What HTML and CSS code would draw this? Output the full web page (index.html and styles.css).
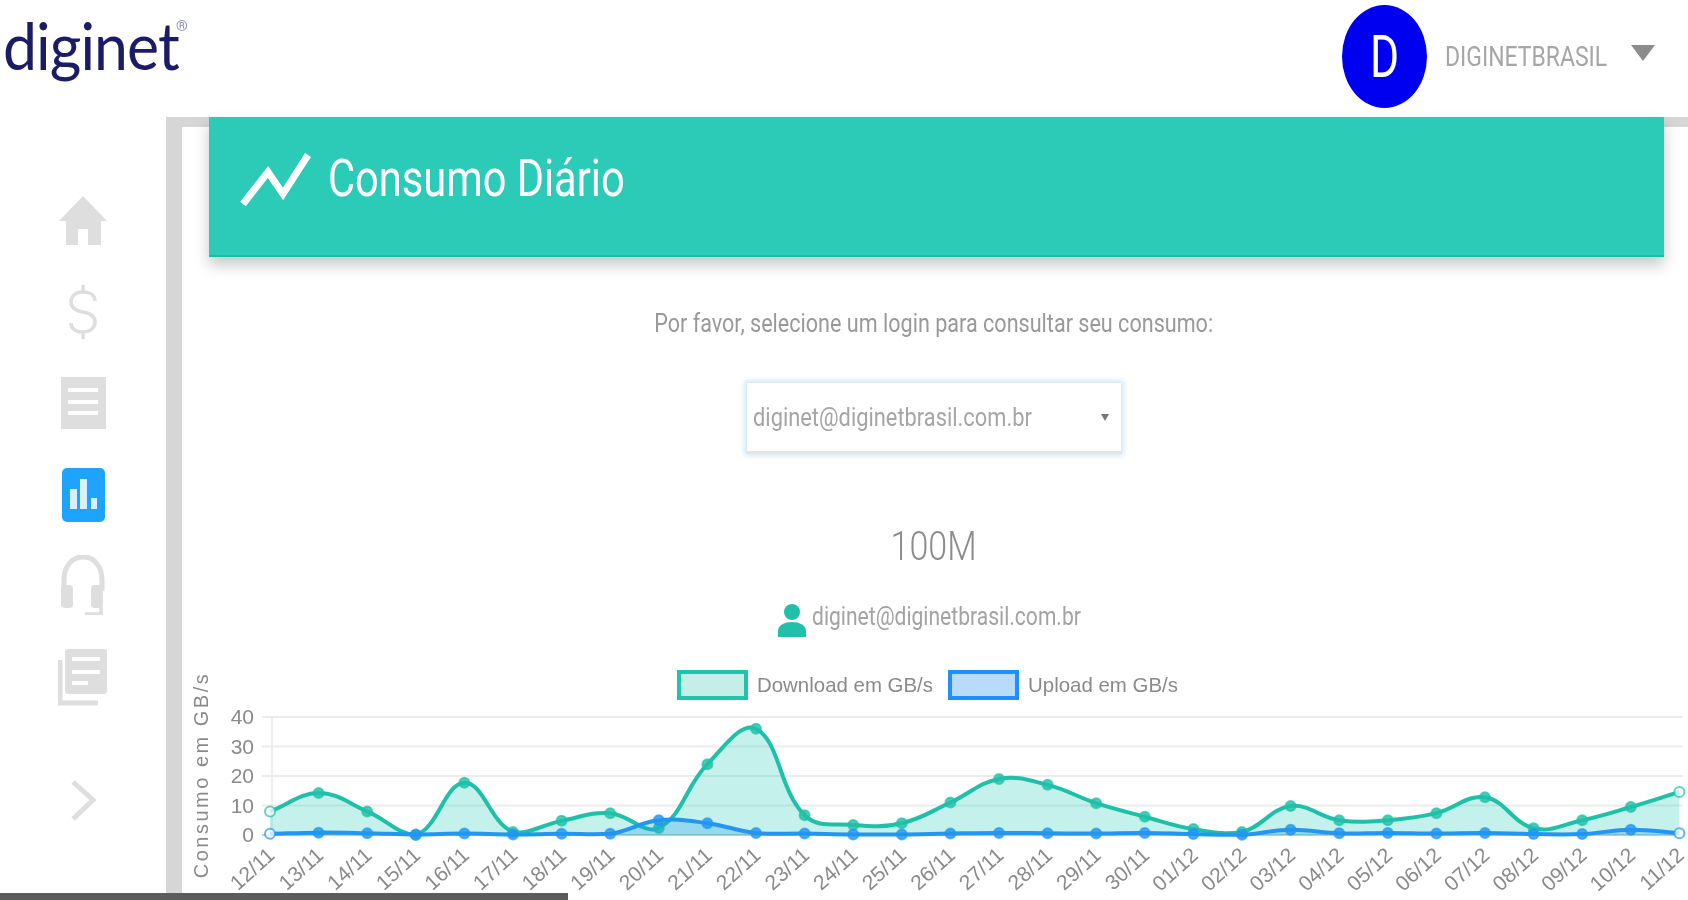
FILE: index.html
```html
<!DOCTYPE html>
<html lang="pt-BR">
<head>
<meta charset="utf-8">
<title>Consumo Diário</title>
<link rel="stylesheet" href="styles.css">
</head>
<body>
<div class="page">
  <header class="topbar">
    <div class="logo"><span class="logo-word">diginet</span><span class="logo-reg">®</span></div>
    <div class="user">
      <div class="avatar"><span class="avatar-letter">D</span></div>
      <span class="user-name">DIGINETBRASIL</span>
      <span class="user-caret"></span>
    </div>
  </header>
  <div class="body">
    <nav class="sidebar">
      <a class="nav-item"><svg class="nav-icon" viewBox="0 0 50 60"><path class="ic-fill" d="M25 5 L49 30 H43 V54 H30 V38 H20 V54 H8 V30 H1 Z"/></svg></a>
      <a class="nav-item"><svg class="nav-icon" viewBox="0 0 50 60"><path class="ic-line" d="M37 19 C37 13 32 10 25 10 C18 10 13 14 13 20 C13 27 19 29 25 30 C31 31 37 34 37 40 C37 46 32 50 25 50 C18 50 13 47 13 41 M25 3 V10 M25 50 V57"/></svg></a>
      <a class="nav-item"><svg class="nav-icon" viewBox="0 0 50 60"><rect class="ic-fill" x="3" y="4" width="45" height="52"/><path class="ic-cut" d="M10 17 H40 M10 29 H40 M10 40 H40"/></svg></a>
      <a class="nav-item"><svg class="nav-icon" viewBox="0 0 50 60"><rect class="ic-active" x="4" y="4" width="43" height="54" rx="5"/><path class="ic-bars" d="M12 25 h7 v20 h-7 Z M22 15 h7 v30 h-7 Z M33 34 h6 v11 h-6 Z"/></svg></a>
      <a class="nav-item"><svg class="nav-icon" viewBox="0 0 50 60"><path class="ic-line ic-thick" d="M6 36 V25 C6 11 14 2 25 2 C36 2 44 11 44 25 V36"/><rect class="ic-fill" x="3" y="30" width="12" height="23" rx="4"/><rect class="ic-fill" x="33" y="30" width="12" height="23" rx="4"/><path class="ic-line" d="M43 50 V59 H27"/></svg></a>
      <a class="nav-item"><svg class="nav-icon" viewBox="0 0 50 60"><rect class="ic-fill" x="7" y="3" width="42" height="45" rx="3"/><path class="ic-cut" d="M14 13 H42 M14 26 H42 M14 37 H30"/><path class="ic-line ic-thick" d="M2 14 V57 H40"/></svg></a>
      <a class="nav-item nav-toggle"><svg class="nav-icon" viewBox="0 0 50 60"><path class="ic-line ic-thick" d="M15 12 L35 30 L15 49"/></svg></a>
    </nav>
    <main class="frame">
      <section class="card-head">
        <svg class="head-icon" viewBox="0 0 72 55"><path d="M3 52 L28 20 L43 42 L68 3"/></svg>
        <h1 class="head-title">Consumo Diário</h1>
      </section>
      <div class="content">
        <p class="prompt"><span class="squish">Por favor, selecione um login para consultar seu consumo:</span></p>
        <div class="select">
          <span class="select-value">diginet@diginetbrasil.com.br</span>
          <span class="select-caret"></span>
        </div>
        <h2 class="plan"><span class="squish">100M</span></h2>
        <div class="login-row">
          <svg class="login-icon" viewBox="0 0 28 34"><circle cx="14" cy="9" r="8"/><path d="M0 34 V28 C0 22 7 19 14 19 C21 19 28 22 28 28 V34 Z"/></svg>
          <span class="login-text">diginet@diginetbrasil.com.br</span>
        </div>
        <svg id="chart" class="chart" viewBox="0 0 1506 240" width="1506" height="240"></svg>
      </div>
    </main>
  </div>
  <div class="scrollbar"></div>
</div>
<script src="chart.js"></script>
</body>
</html>
```
FILE: styles.css
```css
* { box-sizing: border-box; }
html, body { margin: 0; padding: 0; background: #fff; }
body { font-family: Roboto, "Liberation Sans", sans-serif; overflow: hidden; }
.page { position: relative; width: 1688px; height: 900px; overflow: hidden; display: flex; flex-direction: column; background: #fff; filter: blur(0.7px); }

.topbar { height: 117px; flex: none; display: flex; justify-content: space-between; align-items: flex-start; }
.logo { display: flex; align-items: flex-start; padding: 0 0 0 3px; height: 100%; color: #1b1b66; }
.logo-word { display: block; font-family: Lato, sans-serif; font-size: 66px; line-height: 90px; font-weight: 400; transform: scaleX(.92); transform-origin: left top; letter-spacing: -1px; }
.logo-reg { font-size: 15px; line-height: 20px; color: #8d8fb8; margin: 16px 0 0 -18px; }
.user { display: flex; align-items: center; height: 113px; padding-right: 33px; }
.avatar { width: 85px; height: 103px; border-radius: 50%; background: #0000f0; display: flex; align-items: center; justify-content: center; margin-right: 18px; }
.avatar-letter { color: #fff; font-size: 60px; line-height: 60px; display: block; transform: scaleX(.74); }
.user-name { color: #a6a6a6; font-size: 28px; display: block; width: 166px; white-space: nowrap; transform: scaleX(.82); transform-origin: left center; }
.user-caret { width: 0; height: 0; border-left: 12px solid transparent; border-right: 12px solid transparent; border-top: 16px solid #8c8c8c; margin: -8px 0 0 20px; }

.body { flex: 1; display: flex; min-height: 0; }
.sidebar { width: 166px; flex: none; display: flex; flex-direction: column; align-items: center; padding-top: 58px; }
.nav-item { height: 91px; display: flex; align-items: center; justify-content: center; flex: none; }
.nav-toggle { margin-top: 33px; }
.nav-icon { width: 50px; height: 60px; display: block; }
.ic-fill { fill: #dedede; }
.ic-line { fill: none; stroke: #dedede; stroke-width: 3.5; }
.ic-thick { stroke-width: 5; }
.ic-cut { fill: none; stroke: #fff; stroke-width: 4; }
.ic-active { fill: #1ea4ff; }
.ic-bars { fill: #d8efff; }

.frame { flex: 1; min-width: 0; border-left: 16px solid #d6d6d6; border-top: 10px solid #d6d6d6; background: #fff; display: flex; flex-direction: column; }
.card-head { flex: none; height: 140px; margin: -10px 24px 0 27px; background: #2bcbb8; border-bottom: 2px solid #12bfa9; box-shadow: 0 8px 14px rgba(0,0,0,.22); display: flex; align-items: center; padding: 0 0 14px 31px; }
.head-icon { width: 72px; height: 55px; flex: none; }
.head-icon path { fill: none; stroke: #fff; stroke-width: 7; }
.head-title { margin: 0 0 0 16px; color: #fff; font-weight: 400; font-size: 52px; line-height: 60px; white-space: nowrap; transform: scaleX(.8); transform-origin: left center; }

.content { flex: 1; display: flex; flex-direction: column; align-items: center; margin-right: -0px; padding: 0 0 0 0; min-height: 0; }
.squish { display: inline-block; white-space: nowrap; }
.prompt { margin: 51px 3px 0 0; color: #999; font-size: 26px; line-height: 30px; height: 30px; }
.prompt .squish { transform: scaleX(.83); }
.select { margin: 44px 3px 0 0; width: 376px; height: 72px; flex: none; background: #fff; border: 1px solid #d9ebf9; border-bottom: 3px solid #e4e4e4; box-shadow: 0 0 5px 2px #d5e9fa; display: flex; align-items: center; justify-content: space-between; padding: 0 12px 0 6px; color: #a5a5a5; }
.select-value { font-size: 26px; display: block; width: 303px; white-space: nowrap; transform: scaleX(.84); transform-origin: left center; }
.select-caret { width: 0; height: 0; border-left: 4px solid transparent; border-right: 4px solid transparent; border-top: 7px solid #777; }
.plan { margin: 68px 3px 0 0; color: #8c8c8c; font-weight: 300; font-size: 40px; line-height: 50px; height: 50px; }
.plan .squish { transform: scaleX(.85); }
.login-row { margin: 31px 3px 0 0; height: 34px; flex: none; display: flex; align-items: center; gap: 6px; }
.login-icon { width: 28px; height: 34px; flex: none; fill: #22c0ab; }
.login-text { color: #a3a3a3; font-size: 26px; display: block; width: 277px; margin-top: -8px; white-space: nowrap; transform: scaleX(.81); transform-origin: left center; }
.chart { display: block; flex: none; margin-top: 23px; width: 1506px; height: 240px; }
.chart text { font-family: "Liberation Sans", Arial, sans-serif; fill: #8a8a8a; }

.scrollbar { position: absolute; left: 0; bottom: 0; width: 568px; height: 7px; background: #5c5c5c; }
```
FILE: chart.js
```js
(function () {
  var svg = document.getElementById('chart');
  var NS = 'http://www.w3.org/2000/svg';
  function el(name, attrs, text, parent) {
    var n = document.createElementNS(NS, name);
    for (var k in attrs) n.setAttribute(k, attrs[k]);
    if (text) n.textContent = text;
    (parent || svg).appendChild(n);
    return n;
  }
  var OX = 182, OY = 660;
  var labels = ['12/11','13/11','14/11','15/11','16/11','17/11','18/11','19/11','20/11','21/11','22/11','23/11','24/11','25/11','26/11','27/11','28/11','29/11','30/11','01/12','02/12','03/12','04/12','05/12','06/12','07/12','08/12','09/12','10/12','11/12'];
  var down = [8,14.2,8,0,17.7,1,4.8,7.4,2.4,24,36,6.7,3.4,4,11,19,17,10.8,6.2,2,1,9.8,5,5,7.4,12.8,2.3,5,9.5,14.6];
  var up = [.4,.8,.6,.2,.5,.2,.4,.4,5,4,.7,.5,.2,.2,.5,.7,.6,.5,.7,.3,.1,1.8,.6,.7,.5,.7,.3,.3,1.8,.6];
  function X(i) { return 270 - OX + i * 48.6; }
  function Y(v) { return 835 - OY - v * 2.95; }

  [0,10,20,30,40].forEach(function (v) {
    var y = Y(v);
    el('line', { x1: 262 - OX, x2: 1683 - OX, y1: y, y2: y, stroke: v ? '#ececec' : '#c9c9c9', 'stroke-width': 2 });
    el('text', { x: 254 - OX, y: y + 7, 'text-anchor': 'end', 'font-size': 21 }, String(v));
  });
  el('line', { x1: X(0) + 2, x2: X(0) + 2, y1: Y(40), y2: Y(0) + 6, stroke: '#e8e8e8', 'stroke-width': 1.5 });

  el('text', { transform: 'translate(26,' + (775 - OY) + ') rotate(-90)', 'text-anchor': 'middle', 'font-size': 20, 'letter-spacing': 2.5 }, 'Consumo em GB/s');

  el('rect', { x: 679 - OX, y: 672 - OY, width: 67, height: 26, fill: '#c5eee8', stroke: '#1fc4ac', 'stroke-width': 4 });
  el('text', { x: 757 - OX, y: 692 - OY, 'font-size': 21, textLength: 176, lengthAdjust: 'spacingAndGlyphs' }, 'Download em GB/s');
  el('rect', { x: 950 - OX, y: 672 - OY, width: 67, height: 26, fill: '#b9dbfb', stroke: '#1e90ff', 'stroke-width': 4 });
  el('text', { x: 1028 - OX, y: 692 - OY, 'font-size': 21, textLength: 150, lengthAdjust: 'spacingAndGlyphs' }, 'Upload em GB/s');

  function curve(vals) {
    var t = 0.4, pts = vals.map(function (v, i) { return [X(i), Y(v)]; });
    var d = 'M' + pts[0][0] + ' ' + pts[0][1];
    function ctrl(p0, p1, p2) {
      var d01 = Math.hypot(p1[0] - p0[0], p1[1] - p0[1]);
      var d12 = Math.hypot(p2[0] - p1[0], p2[1] - p1[1]);
      var s = d01 + d12 || 1, fa = t * d01 / s, fb = t * d12 / s;
      return [[p1[0] - fa * (p2[0] - p0[0]), p1[1] - fa * (p2[1] - p0[1])],
              [p1[0] + fb * (p2[0] - p0[0]), p1[1] + fb * (p2[1] - p0[1])]];
    }
    for (var i = 0; i < pts.length - 1; i++) {
      var a = ctrl(pts[Math.max(i - 1, 0)], pts[i], pts[i + 1]);
      var b = ctrl(pts[i], pts[i + 1], pts[Math.min(i + 2, pts.length - 1)]);
      d += ' C' + a[1][0] + ' ' + Math.min(a[1][1], Y(0)) + ' ' + b[0][0] + ' ' + Math.min(b[0][1], Y(0)) + ' ' + pts[i + 1][0] + ' ' + pts[i + 1][1];
    }
    return d;
  }
  function series(vals, stroke, fill) {
    var d = curve(vals);
    el('path', { d: d + ' L' + X(vals.length - 1) + ' ' + Y(0) + ' L' + X(0) + ' ' + Y(0) + ' Z', fill: fill });
    el('path', { d: d, fill: 'none', stroke: stroke, 'stroke-width': 4 });
    vals.forEach(function (v, i) {
      var edge = i === 0 || i === vals.length - 1;
      el('circle', { cx: X(i), cy: Y(v), r: 5, fill: edge ? '#fff' : stroke, 'fill-opacity': edge ? .75 : .8, stroke: stroke, 'stroke-opacity': .7, 'stroke-width': 2 });
    });
  }
  series(down, '#1fc0a8', 'rgba(43,203,184,.28)');
  series(up, '#2196f3', 'rgba(33,150,243,.28)');

  labels.forEach(function (t, i) {
    var x = X(i) + 6, y = 857 - OY;
    el('text', { transform: 'translate(' + x + ',' + y + ') rotate(-42)', 'text-anchor': 'end', 'font-size': 21 }, t);
  });
})();
```
